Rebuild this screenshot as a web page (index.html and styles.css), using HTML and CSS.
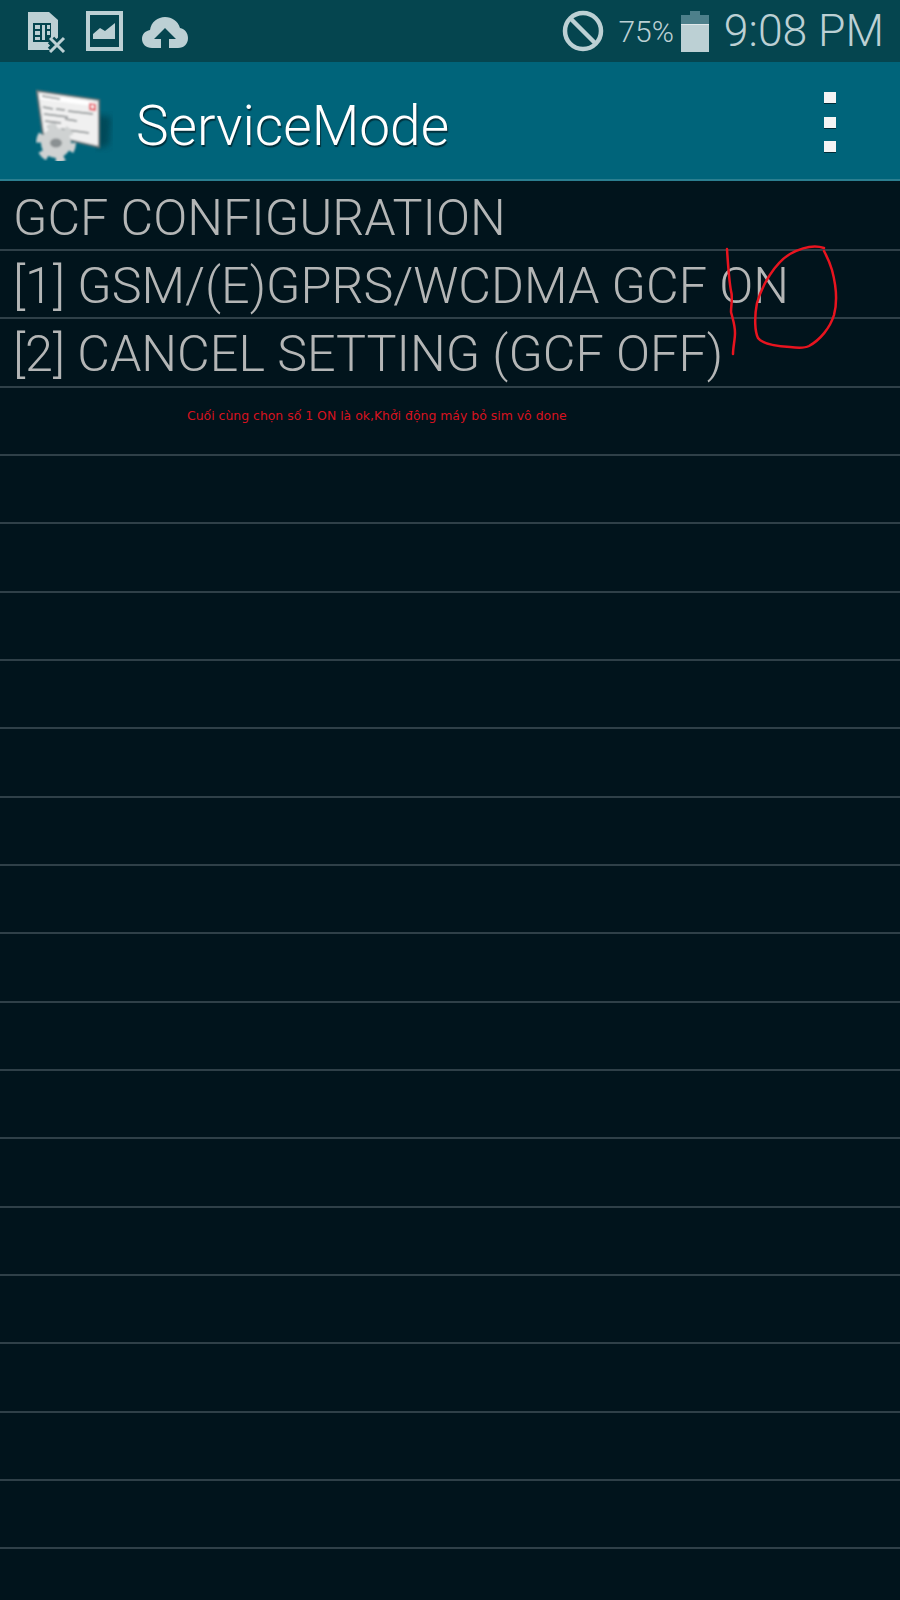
FILE: index.html
```html
<!DOCTYPE html>
<html lang="en">
<head>
  <meta charset="UTF-8">
  <meta name="viewport" content="width=device-width, initial-scale=1.0">
  <title>ServiceMode</title>
  <link rel="stylesheet" href="styles.css">
</head>
<body>
  <div class="status-bar">
    <div class="status-left">
      <svg class="icon-sim" viewBox="0 0 40 44">
        <path fill="#bcd0d4" d="M1 3h21l9 8v30H1z"/>
        <path fill="#05454f" d="M6 14h18v19H6z"/>
        <path fill="#bcd0d4" d="M8 16h5v4H8zM8 22h5v4H8zM8 28h5v3H8zM15 16h3v15h-3zM20 16h3v4h-3zM20 22h3v4h-3z"/>
        <path fill="none" stroke="#05454f" stroke-width="9" d="M24 31l11 11M35 31L24 42"/>
        <path fill="none" stroke="#bcd0d4" stroke-width="3" d="M23 29l14 14M37 29L23 43"/>
      </svg>
      <svg class="icon-picture" viewBox="0 0 37 40">
        <path fill="#bcd0d4" fill-rule="evenodd" d="M0 0h37v40H0zM4 4v32h29V4z"/>
        <path fill="#bcd0d4" d="M7 28v-5l7-6 5 3 10-8v16z"/>
      </svg>
      <svg class="icon-cloud" viewBox="0 0 46 33">
        <path fill="#bcd0d4" d="M10 32C4 32 0 28 0 23c0-5 3-8 8-9 1-8 8-13 15-13 7 0 13 4 15 11 5 1 8 5 8 10 0 6-4 10-10 10z"/>
        <path fill="#05454f" d="M23 12l11 11h-7v9h-8v-9h-7z"/>
      </svg>
    </div>
    <div class="status-right">
      <svg class="icon-block" viewBox="0 0 42 42">
        <circle cx="21" cy="21" r="18" fill="none" stroke="#bcd0d4" stroke-width="4.5"/>
        <path stroke="#bcd0d4" stroke-width="4.5" d="M9 9l24 24"/>
      </svg>
      <span class="battery-text">75%</span>
      <div class="battery">
        <div class="battery-nub"></div>
        <div class="battery-empty"></div>
        <div class="battery-full"></div>
      </div>
      <span class="clock">9:08 PM</span>
    </div>
  </div>

  <div class="action-bar">
    <svg class="app-icon" viewBox="0 0 84 80">
      <defs>
        <filter id="soft"><feGaussianBlur stdDeviation="3"/></filter>
        <filter id="slight"><feGaussianBlur stdDeviation="0.9"/></filter>
      </defs>
      <path fill="#003f4e" opacity="0.75" filter="url(#soft)" d="M62 34l14 2-2 28-12 4z"/>
      <g filter="url(#slight)">
        <path fill="#f0f0f0" stroke="#6f7678" stroke-width="2" d="M2 10l62 9v47L8 53z"/>
        <path fill="#fff" d="M5 13l54 8v4L5 18z"/>
        <path fill="#e5505c" d="M54 22l7 1v7l-7-1z"/>
        <path fill="#fff" d="M56 24l3 .5v3l-3-.5z"/>
        <path stroke="#7a8082" stroke-width="1.6" d="M7 15l18 3M8 26l10 2M21 28l9 1M33 30l25 3M9 33l24 3M10 40l16 2M30 38l12 2M12 46l10 1M26 48l28 4"/>
        <circle cx="21" cy="62" r="16" fill="none" stroke="#cfd2d2" stroke-width="8" stroke-dasharray="8.38 8.38"/>
        <circle cx="21" cy="62" r="15" fill="#cfd2d2"/>
        <ellipse cx="21" cy="62" rx="6" ry="4.5" fill="#8a9092"/>
      </g>
    </svg>
    <span class="app-title">ServiceMode</span>
    <div class="overflow-menu">
      <span class="dot"></span>
      <span class="dot"></span>
      <span class="dot"></span>
    </div>
  </div>

  <div class="list">
    <div class="row">GCF CONFIGURATION</div>
    <div class="row">[1] GSM/(E)GPRS/WCDMA GCF ON</div>
    <div class="row">[2] CANCEL SETTING (GCF OFF)</div>
    <div class="row row-note"><span class="note">Cuối cùng chọn số 1 ON là ok,Khởi động máy bỏ sim vô done</span></div>
    <div class="row"></div>
    <div class="row"></div>
    <div class="row"></div>
    <div class="row"></div>
    <div class="row"></div>
    <div class="row"></div>
    <div class="row"></div>
    <div class="row"></div>
    <div class="row"></div>
    <div class="row"></div>
    <div class="row"></div>
    <div class="row"></div>
    <div class="row"></div>
    <div class="row"></div>
    <div class="row"></div>
    <div class="row"></div>
    <div class="row"></div>
  </div>

  <!-- red marker scribbles on top of the screenshot -->
  <svg class="scribble" viewBox="0 0 900 400">
    <path d="M727 249C728 265 729 280 731 291C733 297 731 305 731 312C733 320 735 325 735 333C735 340 733 347 733 354"/>
    <path d="M824 248C815 245 803 247 790 254C775 263 762 285 757 303C754 318 755 332 758 338C762 344 775 346 790 347C798 348 805 348 809 346C820 340 830 328 834 315C838 300 836 285 832 270C829 260 826 255 824 251"/>
  </svg>
</body>
</html>
```

FILE: styles.css
```css
:root {
  --status-bg: #05454f;
  --bar-bg: #00647a;
  --list-bg: #01141c;
  --line-color: #2f4048;
  --icon-color: #bcd0d4;
  --text-color: #b4b6b6;
  --note-color: #d8121f;
}

html, body {
  margin: 0;
  padding: 0;
}

body {
  width: 900px;
  height: 1600px;
  overflow: hidden;
  position: relative;
  background-color: var(--list-bg);
  font-family: Roboto, "Liberation Sans", sans-serif;
}

.status-bar {
  height: 62px;
  box-sizing: border-box;
  padding: 0 16px 0 27px;
  display: flex;
  justify-content: space-between;
  align-items: center;
  background-color: var(--status-bg);
  color: var(--icon-color);
}

.status-left, .status-right {
  display: flex;
  align-items: center;
}

.icon-sim {
  width: 40px;
  height: 44px;
  margin-right: 19px;
}

.icon-picture {
  width: 37px;
  height: 40px;
  margin-right: 19px;
}

.icon-cloud {
  width: 46px;
  height: 33px;
  margin-top: 3px;
}

.icon-block {
  width: 42px;
  height: 42px;
  margin-right: 14px;
}

.battery-text {
  font-size: 30px;
  font-weight: 300;
  margin-right: 7px;
}

.battery {
  width: 28px;
  display: flex;
  flex-direction: column;
  align-items: center;
  margin-right: 15px;
}

.battery-nub {
  width: 10px;
  height: 4px;
  background-color: #4d808b;
}

.battery-empty {
  width: 100%;
  height: 9px;
  background-color: #4d808b;
}

.battery-full {
  width: 100%;
  height: 27px;
  border-top: 1px solid #e0e8ea;
  background-color: var(--icon-color);
}

.clock {
  font-size: 44.5px;
  font-weight: 300;
  line-height: 1;
}

.action-bar {
  height: 119px;
  box-sizing: border-box;
  border-bottom: 2px solid #2b7f90;
  padding: 0 64px 0 35px;
  display: flex;
  align-items: center;
  background-color: var(--bar-bg);
}

.app-icon {
  width: 84px;
  height: 80px;
  margin-right: 17px;
}

.app-title {
  flex: 1;
  margin-top: 10px;
  font-size: 55px;
  font-weight: 300;
  color: #fff;
  text-shadow: 1px 2px 1px #00303c;
}

.overflow-menu {
  display: flex;
  flex-direction: column;
  gap: 12.3px;
  margin-top: 4px;
}

.dot {
  width: 12px;
  height: 11px;
  background-color: #f4f4f4;
  border-bottom: 1px solid #002a35;
}

.list {
  padding-top: 1.67px;
}

.row {
  height: 68.33px;
  box-sizing: border-box;
  border-bottom: 2px solid var(--line-color);
  padding: 2px 0 0 13px;
  font-size: 50.3px;
  font-weight: 300;
  line-height: 66px;
  white-space: nowrap;
  color: var(--text-color);
}

.row-note {
  display: flex;
  align-items: center;
  padding: 0 0 10px 187px;
}

.note {
  font-family: "DejaVu Sans", sans-serif;
  font-size: 12.45px;
  font-weight: normal;
  line-height: 1;
  color: var(--note-color);
}

.scribble {
  position: absolute;
  top: 0;
  left: 0;
  width: 900px;
  height: 400px;
  fill: none;
  stroke: #e8141f;
  stroke-width: 2.5;
  stroke-linejoin: round;
  stroke-linecap: round;
}
```
